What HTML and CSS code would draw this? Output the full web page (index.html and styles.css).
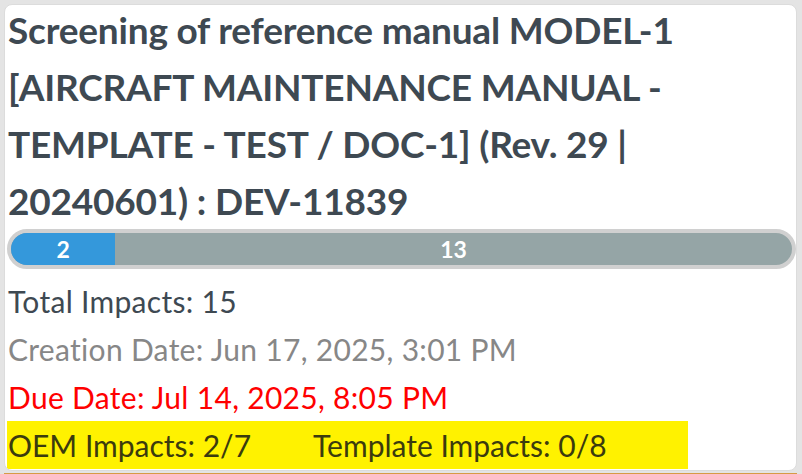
FILE: index.html
```html
<!DOCTYPE html>
<html lang="en">

<head>
    <meta charset="UTF-8">
    <meta name="viewport" content="width=device-width, initial-scale=1.0">
    <title>Screening</title>
    <link rel="stylesheet" href="styles.css">
</head>

<body>
    <div class="card">
        <h3 class="card-title">Screening of reference manual MODEL-1 [AIRCRAFT MAINTENANCE MANUAL - TEMPLATE - TEST / DOC-1] (Rev. 29 | 20240601) : DEV-11839</h3>
        <div class="progress">
            <div class="progress-done" style="width: 13.33%">2</div>
            <div class="progress-rest">13</div>
        </div>
        <p class="info total">Total Impacts: 15</p>
        <p class="info creation">Creation Date: Jun 17, 2025, 3:01 PM</p>
        <p class="info due">Due Date: Jul 14, 2025, 8:05 PM</p>
        <div class="impacts">
            <span class="impact oem">OEM Impacts: 2/7</span>
            <span class="impact template">Template Impacts: 0/8</span>
        </div>
    </div>
    <div class="next-card"></div>
</body>

</html>
```

FILE: styles.css
```css
body {
    font-family: Lato, "Open Sans", sans-serif;
    margin: 0;
    padding: 4px 5px 0 4px;
    background-color: #e4e4e4;
    height: 474px;
    box-sizing: border-box;
    overflow: hidden;
}

.card {
    background-color: #fff;
    border: 1px solid #dcdcdc;
    border-radius: 8px;
    padding: 0 0 2px 2px;
    height: 467px;
    box-sizing: border-box;
    overflow: hidden;
}

.card-title {
    margin: -4px 0 0 0;
    padding: 0 0 0 1px;
    font-size: 37px;
    font-weight: 700;
    line-height: 57px;
    letter-spacing: -0.2px;
    color: #3e4952;
}

.progress {
    display: flex;
    height: 40px;
    border: 4px solid #d0d0d0;
    border-radius: 20px;
    box-sizing: border-box;
    overflow: hidden;
    background-color: #95a5a6;
    color: #fff;
    font-weight: 700;
    font-size: 23px;
}

.progress-done {
    background-color: #3498db;
    display: flex;
    justify-content: center;
    align-items: center;
}

.progress-rest {
    flex: 1;
    display: flex;
    justify-content: center;
    align-items: center;
}

.info {
    margin: 0;
    padding-left: 1px;
    font-size: 30px;
    line-height: 48px;
    letter-spacing: 0.3px;
    color: #3e4952;
}

.total {
    margin-top: 8px;
}

.creation {
    color: #878787;
}

.due {
    color: #ff0000;
}

.impacts {
    display: inline-flex;
    background-color: #fff200;
    color: #3b3b0e;
    font-size: 30px;
    line-height: 48px;
    padding-left: 1px;
}

.oem {
    margin-right: 62px;
}

.template {
    margin-right: 81px;
}

.next-card {
    margin-top: 2px;
    border-top: 2px solid #d79a45;
}
```
